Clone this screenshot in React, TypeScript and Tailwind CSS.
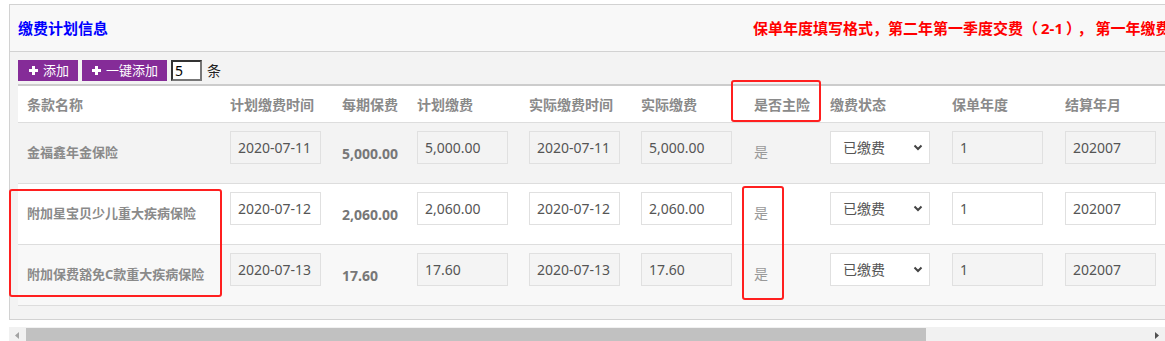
import React from "react";

const cols = "grid grid-cols-[203px_112px_75px_112px_112px_113px_76px_122px_113px_113px_200px]";

type Row = {
  name: string;
  plan: string;
  fee: string;
  planFee: string;
  actDate: string;
  actFee: string;
  year: string;
  settle: string;
  bg: string;
  inputBg: string;
};

const rows: Row[] = [
  { name: "金福鑫年金保险", plan: "2020-07-11", fee: "5,000.00", planFee: "5,000.00", actDate: "2020-07-11", actFee: "5,000.00", year: "1", settle: "202007", bg: "bg-[#f3f3f3]", inputBg: "bg-[#f3f3f3]" },
  { name: "附加星宝贝少儿重大疾病保险", plan: "2020-07-12", fee: "2,060.00", planFee: "2,060.00", actDate: "2020-07-12", actFee: "2,060.00", year: "1", settle: "202007", bg: "bg-white", inputBg: "bg-white" },
  { name: "附加保费豁免C款重大疾病保险", plan: "2020-07-13", fee: "17.60", planFee: "17.60", actDate: "2020-07-13", actFee: "17.60", year: "1", settle: "202007", bg: "bg-[#f8f8f8]", inputBg: "bg-[#f4f4f4]" },
];

function Box({ v, bg }: { v: string; bg: string }) {
  return (
    <div className={`w-[91px] h-[33px] mb-[11px] border border-[#e0e0e0] ${bg} pl-[7px] flex items-center text-[14px] text-[#555]`}>
      {v}
    </div>
  );
}

function Plus() {
  return (
    <svg width="9" height="9" viewBox="0 0 9 9" className="shrink-0">
      <rect x="3" y="0" width="3" height="9" fill="white" />
      <rect x="0" y="3" width="9" height="3" fill="white" />
    </svg>
  );
}

export default function App() {
  const headers = ["条款名称", "计划缴费时间", "每期保费", "计划缴费", "实际缴费时间", "实际缴费", "是否主险", "缴费状态", "保单年度", "结算年月", ""];
  return (
    <div className="relative w-[1165px] h-[341px] overflow-hidden bg-white font-['Noto_Sans','Noto_Sans_CJK_SC',sans-serif]">
      <div className="pl-[9px] pt-[4px]">
        <div className="w-[1400px] border-t border-l border-b border-[#d2d2d2] bg-[#f3f3f3]">
          <div className="h-[47px] flex items-center border-b border-[#d2d2d2] bg-[#f8f8f8] pl-[8px]">
            <div className="w-[735px] text-[15px] font-bold text-[#0000ff] leading-none">缴费计划信息</div>
            <div className="text-[15px] font-bold text-[#ff0000] leading-none whitespace-nowrap">
              保单年度填写格式，第二年第一季度交费（<span className="mx-[3px]">2-1</span>）<span className="ml-[4px] mr-[3px]">，</span>第一年缴费（1-1）
            </div>
          </div>
          <div className="pt-[8px] pl-[8px] pb-[13px]">
            <div className="flex items-center h-[21px]">
              <div className="h-[21px] w-[60px] bg-[#852c98] flex items-center pl-[11px] gap-[5px] text-white text-[13px] leading-none">
                <Plus />
                <span>添加</span>
              </div>
              <div className="ml-[4px] h-[21px] w-[85px] bg-[#852c98] flex items-center pl-[10px] gap-[5px] text-white text-[13px] leading-none">
                <Plus />
                <span>一键添加</span>
              </div>
              <div className="ml-[4px] w-[31px] h-[21px] bg-white border-2 border-t-[#333] border-l-[#333] border-r-[#777] border-b-[#777] flex items-center pl-[2px] text-[14px] text-black leading-none">
                5
              </div>
              <span className="ml-[5px] text-[14px] text-[#222] leading-none">条</span>
            </div>
            <div className="mt-[3px] border-t-2 border-[#cccccc]">
              <div className={`${cols} h-[37px] bg-white border-b border-[#dddddd]`}>
                {headers.map((h, i) => (
                  <div key={i} className="pl-[9px] flex items-center text-[14px] font-bold text-[#8a8a8a] whitespace-nowrap">
                    {h}
                  </div>
                ))}
              </div>
              {rows.map((r, i) => (
                <div key={i} className={`${cols} h-[61px] ${r.bg} border-b border-[#dddddd]`}>
                  <div className="pl-[9px] flex items-center text-[13px] font-bold text-[#8a8a8a] whitespace-nowrap">{r.name}</div>
                  <div className="pl-[9px] flex items-center"><Box v={r.plan} bg={r.inputBg} /></div>
                  <div className="pl-[9px] flex items-center text-[14px] font-bold text-[#777]">{r.fee}</div>
                  <div className="pl-[9px] flex items-center"><Box v={r.planFee} bg={r.inputBg} /></div>
                  <div className="pl-[9px] flex items-center"><Box v={r.actDate} bg={r.inputBg} /></div>
                  <div className="pl-[9px] flex items-center"><Box v={r.actFee} bg={r.inputBg} /></div>
                  <div className="pl-[9px] flex items-center text-[14px] text-[#999] pb-[4px]">是</div>
                  <div className="pl-[9px] flex items-center">
                    <div className="w-[100px] h-[33px] mb-[11px] bg-white border border-[#e0e0e0] pl-[12px] pr-[6px] flex items-center justify-between text-[14px] text-[#555]">
                      <span>已缴费</span>
                      <svg width="10" height="7" viewBox="0 0 10 7">
                        <path d="M1.5 1.5 L5 5 L8.5 1.5" stroke="#444" strokeWidth="2" fill="none" />
                      </svg>
                    </div>
                  </div>
                  <div className="pl-[9px] flex items-center"><Box v={r.year} bg={r.inputBg} /></div>
                  <div className="pl-[9px] flex items-center"><Box v={r.settle} bg={r.inputBg} /></div>
                  <div />
                </div>
              ))}
            </div>
          </div>
        </div>
        <div className="mt-[7px] h-[17px] flex bg-[#f1f1f1]">
          <div className="w-[17px] h-full flex items-start justify-center pt-[5px]">
            <svg width="5" height="7" viewBox="0 0 5 7"><path d="M4 0 L0 3.5 L4 7 Z" fill="#a3a3a3" /></svg>
          </div>
          <div className="mt-[1px] w-[900px] h-[16px] bg-[#c1c1c1]" />
          <div className="flex-1 flex justify-end items-start pt-[5px] pr-[5px]">
            <svg width="5" height="7" viewBox="0 0 5 7"><path d="M0 0 L4 3.5 L0 7 Z" fill="#505050" /></svg>
          </div>
        </div>
      </div>
      <div className="absolute left-[731px] top-[80px] w-[90px] h-[42px] border-2 border-[#ff1f1f] rounded-[3px]" />
      <div className="absolute left-[9px] top-[189px] w-[213px] h-[108px] border-2 border-[#ff1f1f] rounded-[3px]" />
      <div className="absolute left-[742px] top-[186px] w-[42px] h-[114px] border-2 border-[#ff1f1f] rounded-[3px]" />
    </div>
  );
}
